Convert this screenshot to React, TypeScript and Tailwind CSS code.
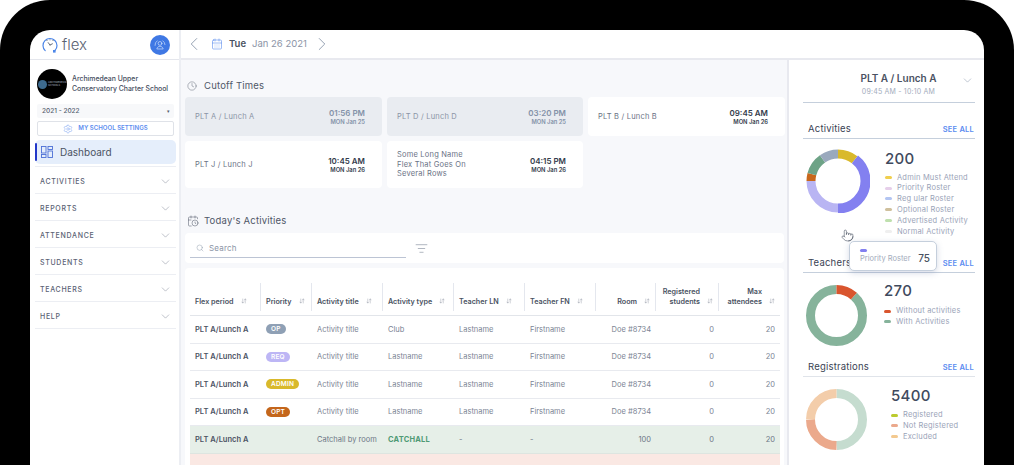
import React from "react";
import {
  ArrowDownUp,
  CalendarClock,
  CalendarDays,
  ChevronDown,
  ChevronLeft,
  ChevronRight,
  Clock,
  ListFilter,
  Pointer,
  Search,
  Settings,
} from "lucide-react";

const menu = ["ACTIVITIES", "REPORTS", "ATTENDANCE", "STUDENTS", "TEACHERS", "HELP"];

const cutoffs = [
  { name: "PLT A / Lunch A", time: "01:56 PM", date: "MON Jan 25", past: true },
  { name: "PLT D / Lunch D", time: "03:20 PM", date: "MON Jan 25", past: true },
  { name: "PLT B / Lunch B", time: "09:45 AM", date: "MON Jan 26", past: false },
  { name: "PLT J / Lunch J", time: "10:45 AM", date: "MON Jan 26", past: false },
  { name: "Some Long Name Flex That Goes On Several Rows", time: "04:15 PM", date: "MON Jan 26", past: false },
];

const columns = [
  { label: "Flex period" },
  { label: "Priority" },
  { label: "Activity title" },
  { label: "Activity type" },
  { label: "Teacher LN" },
  { label: "Teacher FN" },
  { label: "Room", right: true },
  { label: "Registered students", right: true },
  { label: "Max attendees", right: true },
];

const rows = [
  { badge: "OP", badgeClass: "bg-[#8fa0b5]", title: "Activity title", type: "Club" },
  { badge: "REQ", badgeClass: "bg-[#bdb6f5]", title: "Activity title", type: "Lastname" },
  { badge: "ADMIN", badgeClass: "bg-[#d9b92b]", title: "Activity title", type: "Lastname" },
  { badge: "OPT", badgeClass: "bg-[#c4661b]", title: "Activity title", type: "Lastname" },
];

const gridCols = "grid grid-cols-[71px_51px_71px_71px_71px_71px_60px_63px_61px]";

type Segment = { color: string; from: number; to: number; wide?: boolean };

const Donut = ({ size, radius, width, segments }: { size: number; radius: number; width: number; segments: Segment[] }) => (
  <svg width={size} height={size} viewBox={`0 0 ${size} ${size}`} className="shrink-0 -rotate-90">
    {segments.map((s) => (
      <circle
        key={s.color}
        cx={size / 2}
        cy={size / 2}
        r={s.wide ? radius + 0.5 : radius}
        fill="none"
        stroke={s.color}
        strokeWidth={s.wide ? width + 1 : width}
        pathLength={360}
        strokeDasharray={`${s.to - s.from} ${360 - (s.to - s.from)}`}
        strokeDashoffset={-s.from}
      />
    ))}
  </svg>
);

const Legend = ({ items }: { items: { color: string; label: string }[] }) => (
  <div className="flex flex-col">
    {items.map((i) => (
      <div key={i.label} className="flex h-[10.8px] items-center gap-[5px]">
        <span className="h-[3px] w-[7px] rounded-full" style={{ background: i.color }} />
        <span className="text-[7.5px] leading-none tracking-[0.2px] text-[#9aa3b8]">{i.label}</span>
      </div>
    ))}
  </div>
);

const SectionHead = ({ title, border }: { title: string; border: string }) => (
  <div className={`flex h-[16px] items-start justify-between border-b ${border} pl-[5px] pr-[1px]`}>
    <span className="text-[9.5px] leading-[12px] tracking-[0.2px] text-[#3a4354]">{title}</span>
    <span className="mt-[1px] text-[7.5px] font-semibold leading-[12px] tracking-[0.2px] text-[#5a8cf0]">SEE ALL</span>
  </div>
);

export default function App() {
  return (
    <div
      className="h-[465px] w-[1014px] overflow-hidden bg-white"
      style={{ fontFamily: "Inter, 'Open Sans', sans-serif" }}
    >
      <div className="h-full w-full rounded-t-[50px] bg-black px-[30px] pt-[30px]">
        <div className="relative flex h-[435px] w-[954px] overflow-hidden rounded-t-[20px] bg-white">
          {/* sidebar */}
          <aside className="flex w-[151px] shrink-0 flex-col border-r-[2px] border-[#eceef3]">
            <div className="flex h-[30px] shrink-0 items-center justify-between border-b border-[#e4e6ec] pl-[12px] pr-[9px]">
              <div className="flex items-center gap-[4px]">
                <svg width="16" height="16" viewBox="0 0 16 16" fill="none">
                  <path d="M3.2 13.6A7 7 0 1 1 13 13.4" stroke="#4c86e8" strokeWidth="1.2" strokeLinecap="round" />
                  <path d="M8 8 6.2 5.6M8 8l2.4-1.2" stroke="#3d4656" strokeWidth="0.8" strokeLinecap="round" />
                  <path d="M5 3.4h.01M8 2.8h.01M11 3.4h.01" stroke="#3d4656" strokeWidth="0.9" strokeLinecap="round" />
                  <rect x="11" y="13" width="2.6" height="2.6" fill="#4c86e8" />
                </svg>
                <span className="text-[15px] font-light leading-none text-[#5a6272]">flex</span>
              </div>
              <div className="flex h-[20px] w-[20px] items-center justify-center rounded-full bg-[#3f78e4]">
                <svg width="12" height="12" viewBox="0 0 12 12" fill="none" stroke="#cfe0fb" strokeWidth="0.7" strokeLinecap="round">
                  <circle cx="6" cy="4.4" r="1.9" />
                  <path d="M2.9 9.6c.5-1.6 1.7-2.3 3.1-2.3s2.6.7 3.1 2.3z" />
                  <path d="M1 6.4A5 5 0 0 1 3.2 1.8M11 5.6a5 5 0 0 0-2.2-3.8" />
                </svg>
              </div>
            </div>

            <div className="flex flex-col pl-[7px] pr-[5px] pt-[9px]">
              <div className="flex items-center gap-[5px]">
                <div className="flex h-[30px] w-[30px] shrink-0 items-center justify-start overflow-hidden rounded-full bg-black pl-[1px]">
                  <span className="h-[9px] w-[9px] shrink-0 rounded-full bg-[#3d6a8f]" />
                  <span className="ml-[1px] text-[2.5px] leading-[3px] text-[#aab4c0]">ARCHIMEDEAN SCHOOLS</span>
                </div>
                <p className="whitespace-nowrap text-[6.9px] font-medium leading-[10px] text-[#454d5e]">
                  Archimedean Upper
                  <br />
                  Conservatory Charter School
                </p>
              </div>
              <div className="mt-[5px] flex h-[14px] items-center justify-between rounded-[2px] bg-[#f7f8fa] pl-[5px] pr-[4px]">
                <span className="text-[6.5px] font-medium leading-none text-[#555d6e]">2021 - 2022</span>
                <span className="text-[5px] leading-none text-[#555d6e]">▾</span>
              </div>
              <div className="mt-[3px] flex h-[15px] items-center justify-center gap-[5px] rounded-[2px] border border-[#dfe2e8]">
                <Settings size={10} strokeWidth={1} className="text-[#5d8def]" />
                <span className="text-[6.1px] font-semibold leading-none text-[#5d8def]">MY SCHOOL SETTINGS</span>
              </div>
            </div>

            <div className="flex flex-col pl-[5px] pr-[3px] pt-[4px]">
              <div className="relative flex h-[24px] items-center gap-[7px] rounded-[5px] bg-[#e5eefb] pl-[6px]">
                <span className="absolute left-0 top-[3px] h-[18px] w-[2px] rounded-full bg-[#2238c9]" />
                <svg width="12" height="12" viewBox="0 0 12 12" fill="none" stroke="#4c6fd6" strokeWidth="0.9">
                  <rect x="0.5" y="0.5" width="4.5" height="6.5" />
                  <rect x="0.5" y="8.5" width="4.5" height="3" />
                  <rect x="7" y="0.5" width="4.5" height="3" />
                  <rect x="7" y="5" width="4.5" height="6.5" />
                </svg>
                <span className="text-[10px] leading-none text-[#4b5363]">Dashboard</span>
              </div>
              <div className="mt-[2px] h-[1px] bg-[#eceef3]" />
              {menu.map((m) => (
                <div key={m} className="flex h-[27px] items-center justify-between border-b border-[#eceef3] pl-[5px] pr-[4px] pt-[2px]">
                  <span className="text-[7px] font-medium leading-none tracking-[0.7px] text-[#5a6274]">{m}</span>
                  <ChevronDown size={13} strokeWidth={0.8} className="text-[#6a7285]" />
                </div>
              ))}
            </div>
          </aside>

          {/* main */}
          <div className="flex min-w-0 flex-1 flex-col">
            <header className="flex h-[30px] shrink-0 items-center border-b-[2px] border-[#e8e9ef] pl-[2px]">
              <ChevronLeft size={22} strokeWidth={0.8} className="text-[#6f7f97]" />
              <CalendarDays size={12} strokeWidth={1.2} className="ml-[6px] text-[#5d8def]" />
              <span className="ml-[6px] text-[9.5px] font-semibold leading-none text-[#4a5262]">Tue</span>
              <span className="ml-[6px] text-[9.5px] leading-none text-[#8b94a6]">Jan 26 2021</span>
              <ChevronRight size={22} strokeWidth={0.8} className="ml-[4px] text-[#6f7f97]" />
            </header>

            <div className="flex min-h-0 flex-1">
              <main className="flex w-[606px] shrink-0 flex-col overflow-hidden bg-[#f7f8fb] pl-[4px] pr-[3px] pt-[19px]">
                <div className="flex h-[14px] shrink-0 items-center gap-[7px] pl-[2px]">
                  <Clock size={10} strokeWidth={1} className="text-[#4a5262]" />
                  <span className="text-[9.5px] leading-none tracking-[0.2px] text-[#4f5768]">Cutoff Times</span>
                </div>
                <div className="mt-[4px] grid shrink-0 grid-cols-[197px_196px_197px] gap-x-[5px] gap-y-[5px]">
                  {cutoffs.map((c, i) => (
                    <div
                      key={c.name}
                      className={`flex items-center justify-between rounded-[4px] pl-[10px] pr-[17px] ${i < 3 ? "h-[39px]" : "h-[47px]"} ${c.past ? "bg-[#e9ecf1]" : "bg-white"}`}
                    >
                      <span className={`max-w-[82px] text-[7.5px] leading-[9.6px] tracking-[0.2px] ${c.past ? "text-[#8b94a6]" : "text-[#6a7285]"}`}>{c.name}</span>
                      <div className={`flex flex-col items-end ${c.past ? "text-[#8492a8]" : "text-[#343c4c]"}`}>
                        <span className="text-[8px] font-semibold leading-[10px]">{c.time}</span>
                        <span className="text-[5.8px] font-semibold leading-[8px]">{c.date}</span>
                      </div>
                    </div>
                  ))}
                </div>

                <div className="mt-[26px] flex h-[14px] shrink-0 items-center gap-[5px] pl-[2px]">
                  <CalendarClock size={12} strokeWidth={1} className="text-[#4a5262]" />
                  <span className="text-[9.5px] leading-none tracking-[0.2px] text-[#4f5768]">Today's Activities</span>
                </div>

                <div className="mt-[5px] flex h-[30px] shrink-0 items-center gap-[9px] rounded-[4px] bg-white pl-[5px]">
                  <div className="flex h-[20px] w-[216px] items-center gap-[5px] border-b border-[#bcc4d4] pl-[6px]">
                    <Search size={8} strokeWidth={1.2} className="text-[#7c8aa0]" />
                    <span className="text-[8px] leading-none tracking-[0.2px] text-[#8b94a6]">Search</span>
                  </div>
                  <ListFilter size={13} strokeWidth={0.9} className="text-[#5e6a7e]" />
                </div>

                <div className="mt-[5px] shrink-0 rounded-t-[4px] bg-white pl-[5px] pt-[15px]">
                  <div className={`${gridCols} h-[33px] w-[590px] border-b border-[#e2e5ea] pb-[4px]`}>
                    {columns.map((col, i) => (
                      <div
                        key={col.label}
                        className={`flex items-end gap-[7px] pb-[5px] pl-[5px] pr-[5px] text-[7.2px] font-semibold leading-[9.5px] text-[#4a5262] ${col.right ? "justify-end text-right" : ""} ${i < columns.length - 1 ? "border-r border-[#e4e7ee]" : ""}`}
                      >
                        <span className={col.label.includes(" ") && col.right ? "w-[40px]" : ""}>{col.label}</span>
                        <ArrowDownUp size={6} strokeWidth={1.2} className="mb-[2px] shrink-0 text-[#5e6a7e]" />
                      </div>
                    ))}
                  </div>
                  {rows.map((r) => (
                    <div key={r.badge} className={`${gridCols} h-[27.6px] w-[590px] items-center border-b border-[#e8eaef] text-[7.5px] text-[#7b8494]`}>
                      <span className="pl-[5px] font-semibold text-[#4a5262]">PLT A/Lunch A</span>
                      <span className="flex items-center pl-[5px]">
                        <span className={`flex h-[10px] items-center rounded-full px-[5px] text-[6.5px] font-semibold leading-none tracking-[0.2px] text-white ${r.badgeClass}`}>{r.badge}</span>
                      </span>
                      <span className="pl-[5px]">{r.title}</span>
                      <span className="pl-[5px]">{r.type}</span>
                      <span className="pl-[5px]">Lastname</span>
                      <span className="pl-[5px]">Firstname</span>
                      <span className="pr-[5px] text-right">Doe #8734</span>
                      <span className="pr-[5px] text-right">0</span>
                      <span className="pr-[5px] text-right">20</span>
                    </div>
                  ))}
                  <div className={`${gridCols} h-[28px] w-[590px] items-center border-b border-[#dde5e0] bg-[#e6efe8] text-[7.5px] text-[#6d7786]`}>
                    <span className="pl-[5px] font-semibold text-[#4a5262]">PLT A/Lunch A</span>
                    <span />
                    <span className="pl-[5px] whitespace-nowrap">Catchall by room</span>
                    <span className="pl-[5px] font-bold tracking-[0.2px] text-[#4f9a75]">CATCHALL</span>
                    <span className="pl-[5px]">-</span>
                    <span className="pl-[5px]">-</span>
                    <span className="pr-[5px] text-right">100</span>
                    <span className="pr-[5px] text-right">0</span>
                    <span className="pr-[5px] text-right">20</span>
                  </div>
                  <div className="h-[12px] w-[590px] bg-[#fae8e3]" />
                </div>
              </main>

              {/* right panel */}
              <section className="flex w-[197px] shrink-0 flex-col border-l-[2px] border-[#e8e9ef] pl-[14px] pr-[9px] pt-[11px]">
                <div className="relative flex h-[32px] flex-col items-center border-b border-[#c5cfdc] pl-[19px] pt-[1px]">
                  <span className="text-[10px] font-semibold leading-[13px] text-[#4a5262]">PLT A / Lunch A</span>
                  <span className="mt-[2px] text-[7px] leading-[9px] tracking-[0.2px] text-[#a3acbc]">09:45 AM - 10:10 AM</span>
                  <ChevronDown size={13} strokeWidth={0.8} className="absolute right-[1px] top-[3px] text-[#6f7f97]" />
                </div>

                <div className="mt-[20px]">
                  <SectionHead title="Activities" border="border-[#c5cfdc]" />
                  <div className="mt-[10px] flex">
                    <div className="ml-[3px]">
                      <Donut
                        size={64}
                        radius={27}
                        width={9}
                        segments={[
                          { color: "#d9b92b", from: 0, to: 38 },
                          { color: "#b9b5f3", from: 180, to: 270 },
                          { color: "#c8671c", from: 270, to: 285 },
                          { color: "#6ea387", from: 285, to: 325 },
                          { color: "#9aa9bd", from: 325, to: 360 },
                          { color: "#8380f0", from: 38, to: 180, wide: true },
                        ]}
                      />
                    </div>
                    <div className="ml-[15px] mt-[1px] flex flex-col">
                      <span className="text-[15px] font-medium leading-[18px] tracking-[0.3px] text-[#3f4a5e]">200</span>
                      <div className="mt-[4px]">
                        <Legend
                          items={[
                            { color: "#f0cf4f", label: "Admin Must Attend" },
                            { color: "#e6cfea", label: "Priority Roster" },
                            { color: "#b3c5f2", label: "Reg ular Roster" },
                            { color: "#cfc09d", label: "Optional Roster" },
                            { color: "#bfe0ae", label: "Advertised Activity" },
                            { color: "#efefef", label: "Normal Activity" },
                          ]}
                        />
                      </div>
                    </div>
                  </div>
                </div>

                <div className="mt-[20px]">
                  <SectionHead title="Teachers" border="border-[#c5cfdc]" />
                  <div className="mt-[12px] flex">
                    <div className="ml-[3px]">
                      <Donut
                        size={61}
                        radius={26}
                        width={9}
                        segments={[
                          { color: "#86b39b", from: 42, to: 360 },
                          { color: "#d9552e", from: 0, to: 42 },
                        ]}
                      />
                    </div>
                    <div className="ml-[17px] -mt-[1px] flex flex-col">
                      <span className="text-[15px] font-medium leading-[14px] tracking-[0.3px] text-[#3f4a5e]">270</span>
                      <div className="mt-[8px]">
                        <Legend
                          items={[
                            { color: "#d9552e", label: "Without activities" },
                            { color: "#86b39b", label: "With Activities" },
                          ]}
                        />
                      </div>
                    </div>
                  </div>
                </div>

                <div className="mt-[15px]">
                  <SectionHead title="Registrations" border="border-[#e0e4ea]" />
                  <div className="mt-[12px] flex">
                    <div className="ml-[3px]">
                      <Donut
                        size={61}
                        radius={26}
                        width={9}
                        segments={[
                          { color: "#c5dccf", from: 0, to: 180 },
                          { color: "#eba98c", from: 180, to: 270 },
                          { color: "#f3cdaa", from: 270, to: 360 },
                        ]}
                      />
                    </div>
                    <div className="ml-[24px] flex flex-col">
                      <span className="text-[15px] font-medium leading-[14px] tracking-[0.3px] text-[#3f4a5e]">5400</span>
                      <div className="mt-[7px]">
                        <Legend
                          items={[
                            { color: "#bccb2e", label: "Registered" },
                            { color: "#eba98c", label: "Not Registered" },
                            { color: "#f3c98f", label: "Excluded" },
                          ]}
                        />
                      </div>
                    </div>
                  </div>
                </div>
              </section>
            </div>
          </div>

          {/* tooltip over the teachers header */}
          <Pointer size={13} strokeWidth={1} className="absolute left-[811px] top-[199px] text-[#3a4354]" />
          <div className="absolute left-[819px] top-[211px] flex h-[30px] w-[88px] flex-col justify-center rounded-[5px] border border-[#c5cfdc] bg-white pl-[10px] pr-[6px] shadow-[0_2px_6px_rgba(90,110,160,0.25)]">
            <span className="h-[3px] w-[7px] rounded-full bg-[#8380f0]" />
            <div className="mt-[1px] flex items-center justify-between">
              <span className="text-[7.5px] leading-[11px] text-[#a3acbc]">Priority Roster</span>
              <span className="text-[10px] font-medium leading-[11px] text-[#4a5262]">75</span>
            </div>
          </div>
        </div>
      </div>
    </div>
  );
}
